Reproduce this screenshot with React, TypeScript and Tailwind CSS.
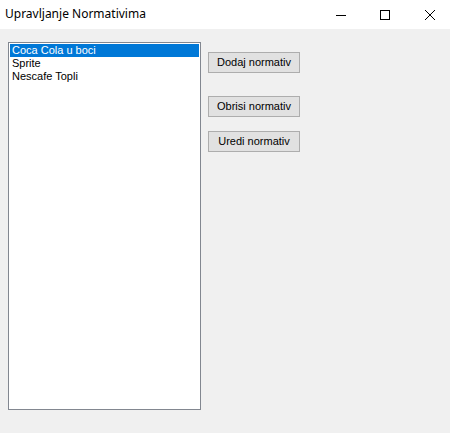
const items = ["Coca Cola u boci", "Sprite", "Nescafe Topli"];

const WinButton = ({ label, className = "" }: { label: string; className?: string }) => (
  <button
    className={`w-[92px] h-[21px] border border-[#adadad] bg-[#e1e1e1] text-[11px] leading-[13px] text-black flex items-center justify-center ${className}`}
  >
    {label}
  </button>
);

export default function App() {
  return (
    <div
      className="w-[450px] h-[433px] flex flex-col bg-[#f0f0f0] overflow-hidden"
      style={{ fontFamily: '"Liberation Sans", Arial, sans-serif' }}
    >
      {/* title bar */}
      <div className="h-[29px] bg-white flex items-center shrink-0">
        <div
          className="pl-[5px] text-[12px] text-black flex-1 pb-[1px]"
          style={{ fontFamily: '"Noto Sans", "Open Sans", sans-serif' }}
        >
          Upravljanje Normativima
        </div>
        <div className="flex items-center pr-[15px] gap-[34px]">
          <svg width="10" height="10" viewBox="0 0 10 10">
            <path d="M0 5.5h10" stroke="#000" strokeWidth="1" />
          </svg>
          <svg width="10" height="10" viewBox="0 0 10 10">
            <rect x="0.5" y="0.5" width="9" height="9" fill="none" stroke="#000" strokeWidth="1" />
          </svg>
          <svg width="10" height="10" viewBox="0 0 10 10" className="ml-px">
            <path d="M0 0L10 10M10 0L0 10" stroke="#000" strokeWidth="1" />
          </svg>
        </div>
      </div>

      {/* client area */}
      <div className="flex pl-[8px] pt-[13px]">
        <div className="w-[193px] h-[368px] border border-[#828790] bg-white p-[1px] text-[11px] leading-[13px]">
          {items.map((it, i) => (
            <div
              key={it}
              className={`h-[13px] pl-[2px] whitespace-nowrap ${i === 0 ? "bg-[#0078d7] text-white" : "text-black"}`}
            >
              {it}
            </div>
          ))}
        </div>
        <div className="flex flex-col ml-[7px] pt-[10px]">
          <WinButton label="Dodaj normativ" />
          <WinButton label="Obrisi normativ" className="mt-[23px]" />
          <WinButton label="Uredi normativ" className="mt-[14px]" />
        </div>
      </div>
    </div>
  );
}
